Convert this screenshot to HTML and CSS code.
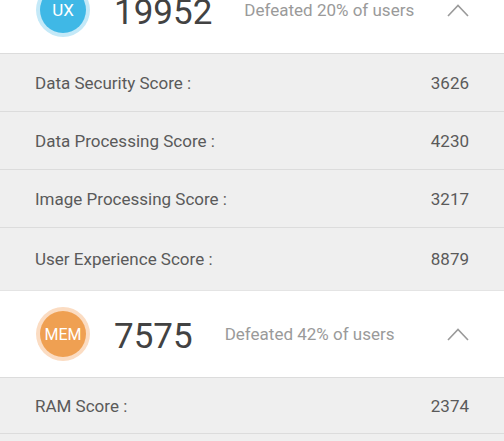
FILE: index.html
```html
<!DOCTYPE html>
<html>
<head>
<meta charset="utf-8">
<link rel="stylesheet" href="styles.css">
</head>
<body>
<div class="page">
  <section class="group">
    <div class="head">
      <div class="badge badge-ux">UX</div>
      <div class="total">19952</div>
      <div class="defeated">Defeated 20% of users</div>
      <svg class="chev" width="22" height="13" viewBox="0 0 22 13"><polyline points="1,12 11,1.5 21,12" fill="none" stroke="#9a9a9a" stroke-width="1.6"/></svg>
    </div>
    <div class="rows">
      <div class="row"><span>Data Security Score :</span><span>3626</span></div>
      <div class="row"><span>Data Processing Score :</span><span>4230</span></div>
      <div class="row"><span>Image Processing Score :</span><span>3217</span></div>
      <div class="row row-last"><span>User Experience Score :</span><span>8879</span></div>
    </div>
  </section>
  <section class="group">
    <div class="head">
      <div class="badge badge-mem">MEM</div>
      <div class="total">7575</div>
      <div class="defeated">Defeated 42% of users</div>
      <svg class="chev" width="22" height="13" viewBox="0 0 22 13"><polyline points="1,12 11,1.5 21,12" fill="none" stroke="#9a9a9a" stroke-width="1.6"/></svg>
    </div>
    <div class="rows">
      <div class="row row-short"><span>RAM Score :</span><span>2374</span></div>
      <div class="row"></div>
    </div>
  </section>
</div>
</body>
</html>
```
FILE: styles.css
```css
html, body {
  margin: 0;
  padding: 0;
  background: #ffffff;
  overflow: hidden;
}
.page {
  margin-top: -33px;
  font-family: Roboto, "Liberation Sans", sans-serif;
}
.group {
  border-bottom: 1px solid #e4e4e4;
}
.head {
  height: 86px;
  display: flex;
  align-items: center;
  padding-left: 40px;
  background: #ffffff;
  border-bottom: 1px solid #dcdcdc;
}
.badge {
  width: 46px;
  height: 46px;
  border-radius: 50%;
  display: flex;
  align-items: center;
  justify-content: center;
  color: #ffffff;
  font-size: 17px;
  flex-shrink: 0;
}
.badge-ux {
  background: #3fb8e6;
  box-shadow: 0 0 0 4px #c4e9f8;
}
.badge-mem {
  background: #efa052;
  box-shadow: 0 0 0 4px #fbdcc2;
  font-size: 16px;
}
.total {
  margin-left: 28px;
  margin-top: 4px;
  font-size: 35px;
  color: #424242;
}
.defeated {
  margin-left: 32px;
  font-size: 17px;
  color: #9a9a9a;
}
.chev {
  margin-left: auto;
  margin-right: 35px;
  display: block;
}
.rows {
  background: #efefef;
}
.row {
  height: 57px;
  display: flex;
  align-items: center;
  justify-content: space-between;
  padding: 0 35px;
  font-size: 17px;
  color: #5a5a5a;
  border-bottom: 1px solid #dcdcdc;
}
.row-last {
  height: 62px;
  border-bottom: none;
}
.row-short {
  height: 55px;
}
```
